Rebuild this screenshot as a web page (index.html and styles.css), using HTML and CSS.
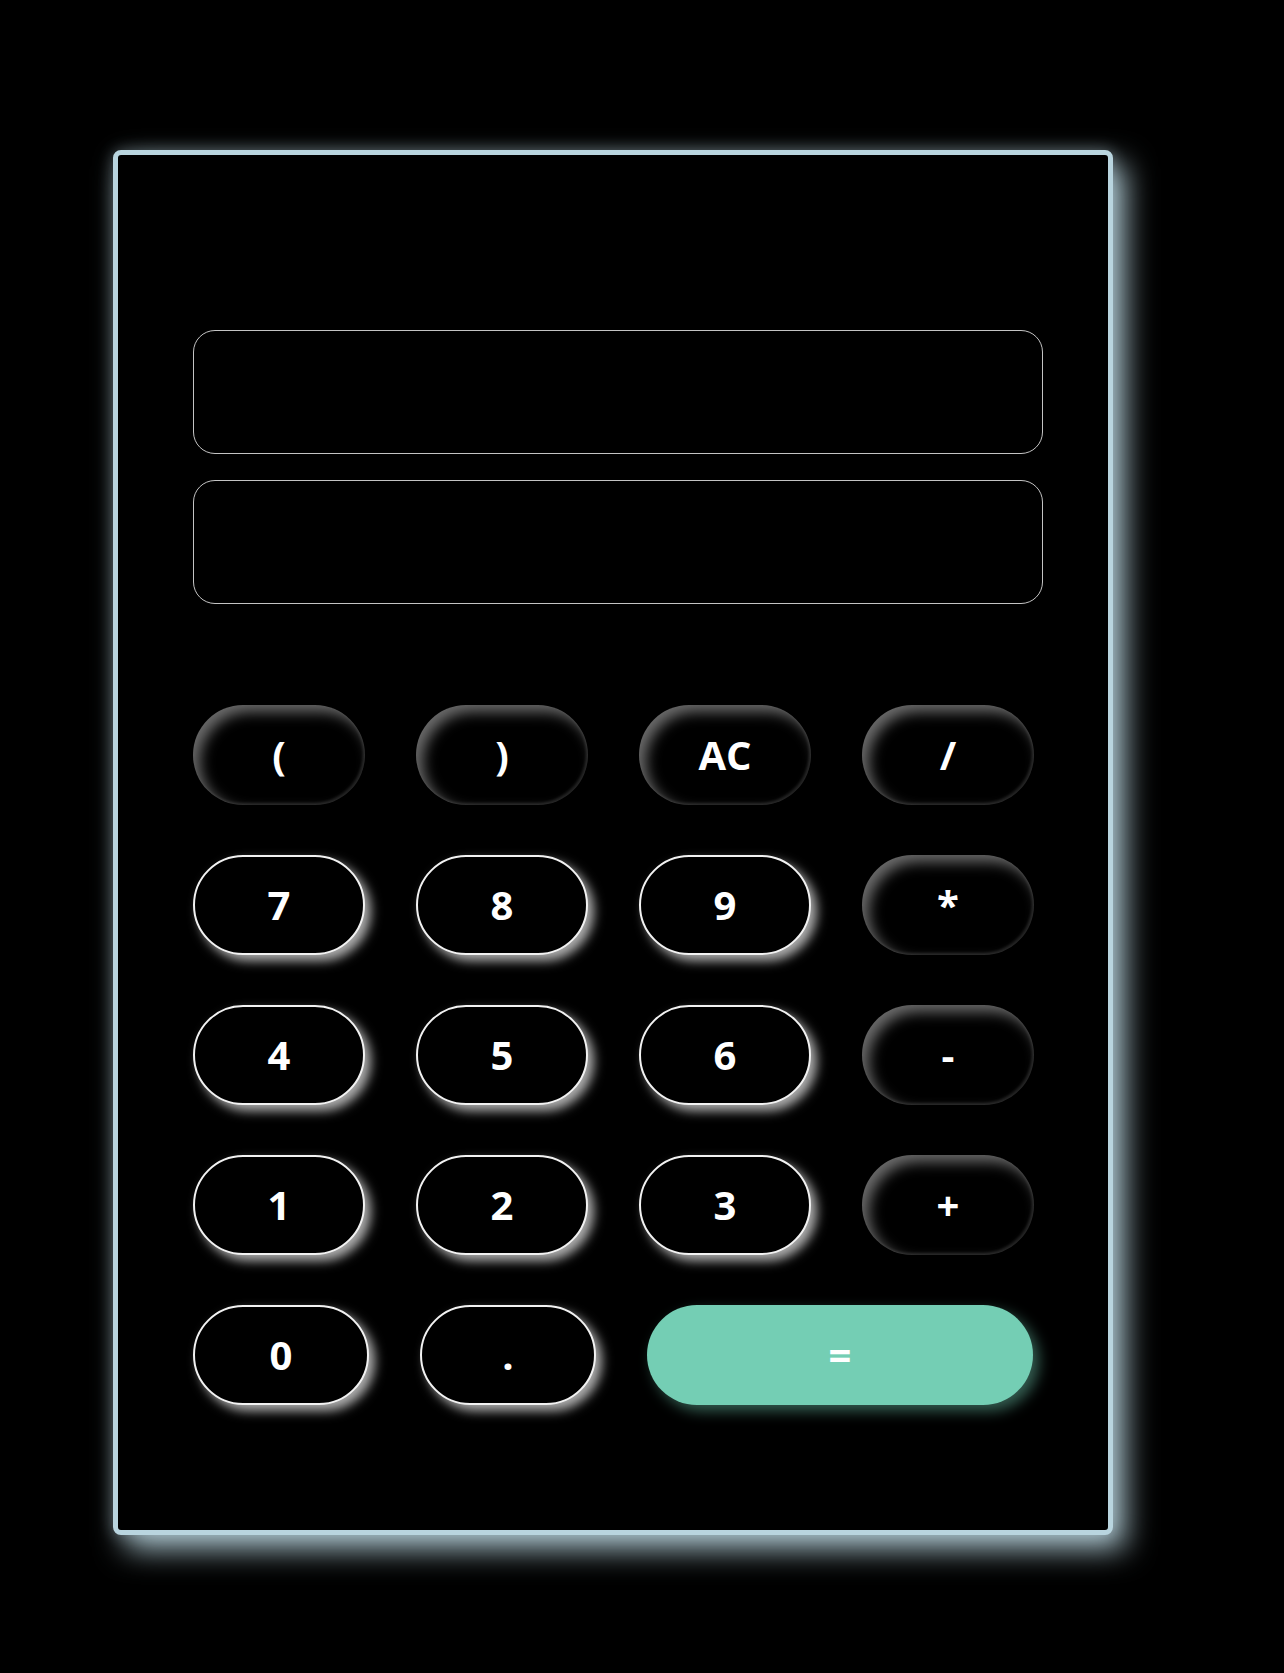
FILE: index.html
```html
<!DOCTYPE html>
<html>
<head>
<meta charset="utf-8">
<link rel="stylesheet" href="styles.css">
</head>
<body>
<div class="calc">
  <div class="screens">
    <div class="screen"></div>
    <div class="screen"></div>
  </div>
  <div class="keys">
    <button class="key op">(</button>
    <button class="key op">)</button>
    <button class="key op">AC</button>
    <button class="key op">/</button>
    <button class="key num">7</button>
    <button class="key num">8</button>
    <button class="key num">9</button>
    <button class="key op">*</button>
    <button class="key num">4</button>
    <button class="key num">5</button>
    <button class="key num">6</button>
    <button class="key op">-</button>
    <button class="key num">1</button>
    <button class="key num">2</button>
    <button class="key num">3</button>
    <button class="key op">+</button>
  </div>
  <div class="lastrow">
    <button class="key num wide">0</button>
    <button class="key num wide">.</button>
    <button class="key eq">=</button>
  </div>
</div>
</body>
</html>
```
FILE: styles.css
```css
html, body {
  margin: 0;
  padding: 0;
  background: #000;
}
body {
  padding: 150px 0 0 113px;
  height: 1673px;
  box-sizing: border-box;
  font-family: "Open Sans", "Noto Sans", sans-serif;
}
.calc {
  width: 1000px;
  height: 1385px;
  box-sizing: border-box;
  border: 5px solid #b9d5df;
  border-radius: 8px;
  background: #000;
  box-shadow: 12px 14px 30px rgba(185, 213, 223, 0.9), 0 0 16px rgba(185, 213, 223, 0.35);
  padding: 175px 75px 0 75px;
}
.screens {
  display: flex;
  flex-direction: column;
  gap: 26px;
}
.screen {
  width: 850px;
  height: 124px;
  box-sizing: border-box;
  border: 1px solid #c4c4c4;
  border-radius: 22px;
}
.keys {
  margin-top: 101px;
  display: grid;
  grid-template-columns: repeat(4, 172px);
  column-gap: 51px;
  row-gap: 50px;
}
.key {
  height: 100px;
  border-radius: 50px;
  background: #000;
  color: #fff;
  font-family: "Open Sans", "Noto Sans", sans-serif;
  font-weight: 700;
  font-size: 40px;
  line-height: 1;
  padding: 0;
  box-sizing: border-box;
  display: flex;
  align-items: center;
  justify-content: center;
}
.op {
  border: none;
  box-shadow: inset 7px 7px 14px rgba(255, 255, 255, 0.42), inset -2px -2px 3px rgba(255, 255, 255, 0.12);
}
.num {
  border: 2px solid #f2f2f2;
  box-shadow: 6px 6px 11px rgba(255, 255, 255, 0.68);
}
.lastrow {
  margin-top: 50px;
  display: flex;
  gap: 51px;
}
.wide {
  width: 176px;
}
.eq {
  width: 386px;
  border: none;
  background: #74ceb4;
  box-shadow: 6px 6px 14px rgba(116, 206, 180, 0.45);
}
```
